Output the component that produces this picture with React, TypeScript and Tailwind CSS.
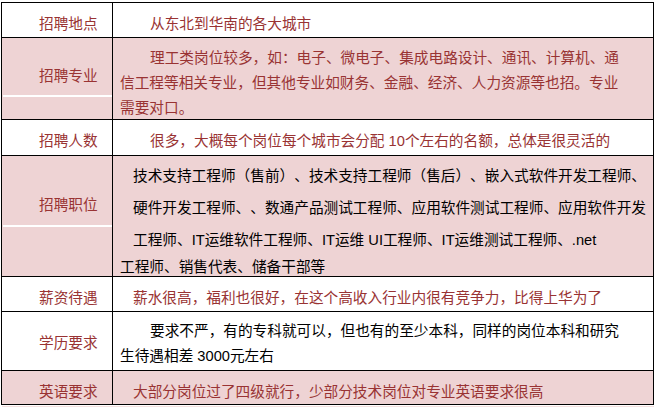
import React from 'react';

type Line = { text: string; cls?: string };

interface Row {
  label: string;
  height: string;
  pink?: boolean;
  labelPad: string;
  // white rule inside the label cell (only in some pink rows)
  rule?: string;
  textPad: string;
  leading: string;
  color: string;
  lines: Line[];
}

const rows: Row[] = [
  {
    label: '招聘地点',
    height: 'h-[35px]',
    labelPad: 'pt-[11px]',
    textPad: 'pt-[11px]',
    leading: 'leading-[20px]',
    color: 'text-[#993333]',
    lines: [{ text: '从东北到华南的各大城市', cls: 'pl-[30px]' }],
  },
  {
    label: '招聘专业',
    height: 'h-[82px]',
    pink: true,
    labelPad: 'pt-[28px]',
    rule: 'top-[57px]',
    textPad: 'pt-[8px]',
    leading: 'leading-[25px]',
    color: 'text-[#993333]',
    lines: [
      { text: '理工类岗位较多，如：电子、微电子、集成电路设计、通讯、计算机、通', cls: 'pl-[30px]' },
      { text: '信工程等相关专业，但其他专业如财务、金融、经济、人力资源等也招。专业' },
      { text: '需要对口。' },
    ],
  },
  {
    label: '招聘人数',
    height: 'h-[36px]',
    labelPad: 'pt-[11px]',
    textPad: 'pt-[11px]',
    leading: 'leading-[20px]',
    color: 'text-[#993333]',
    lines: [{ text: '很多，大概每个岗位每个城市会分配 10个左右的名额，总体是很灵活的', cls: 'pl-[30px]' }],
  },
  {
    label: '招聘职位',
    height: 'h-[121px]',
    pink: true,
    labelPad: 'pt-[39px]',
    rule: 'top-[69px]',
    textPad: 'pt-[7px]',
    leading: 'leading-[27px]',
    color: 'text-black',
    lines: [
      { text: '技术支持工程师（售前）、技术支持工程师（售后）、嵌入式软件开发工程师、', cls: 'pl-[13px]' },
      { text: '硬件开发工程师、、数通产品测试工程师、应用软件测试工程师、应用软件开发', cls: 'pl-[13px] mt-[5px]' },
      { text: '工程师、IT运维软件工程师、IT运维 UI工程师、IT运维测试工程师、.net', cls: 'pl-[13px] mt-[5px]' },
      { text: '工程师、销售代表、储备干部等' },
    ],
  },
  {
    label: '薪资待遇',
    height: 'h-[35px]',
    labelPad: 'pt-[11px]',
    textPad: 'pt-[11px]',
    leading: 'leading-[20px]',
    color: 'text-[#993333]',
    lines: [{ text: '薪水很高，福利也很好，在这个高收入行业内很有竞争力，比得上华为了', cls: 'pl-[13px]' }],
  },
  {
    label: '学历要求',
    height: 'h-[59px]',
    labelPad: 'pt-[21px]',
    textPad: 'pt-[7px]',
    leading: 'leading-[25px]',
    color: 'text-black',
    lines: [
      { text: '要求不严，有的专科就可以，但也有的至少本科，同样的岗位本科和研究', cls: 'pl-[30px]' },
      { text: '生待遇相差 3000元左右' },
    ],
  },
  {
    label: '英语要求',
    height: 'h-[33px]',
    pink: true,
    labelPad: 'pt-[11px]',
    textPad: 'pt-[11px]',
    leading: 'leading-[20px]',
    color: 'text-[#993333]',
    lines: [{ text: '大部分岗位过了四级就行，少部分技术岗位对专业英语要求很高', cls: 'pl-[13px]' }],
  },
];

export default function App() {
  return (
    <div
      className="w-[662px] h-[409px] bg-white overflow-hidden text-[14.67px] [text-spacing-trim:space-all]"
      style={{ fontFamily: '"Liberation Sans", "Noto Sans CJK SC", sans-serif' }}
    >
      <div className="ml-[1px] mt-[2px] w-[653px] border border-black">
        {rows.map((row, i) => (
          <div
            key={row.label}
            className={`flex ${row.height} ${i < rows.length - 1 ? 'border-b border-black' : ''} ${row.pink ? 'bg-[#eed3d4]' : ''}`}
          >
            {/* 左侧标题 */}
            <div className={`relative w-[111px] shrink-0 border-r border-black pl-[37px] leading-[20px] text-[#993333] ${row.labelPad}`}>
              {row.label}
              {row.rule && <div className={`absolute left-[1px] right-0 h-[2px] bg-white ${row.rule}`} />}
            </div>

            {/* 右侧内容 */}
            <div className={`flex-1 pl-[7px] whitespace-nowrap ${row.textPad} ${row.leading} ${row.color}`}>
              {row.lines.map((line, j) => (
                <div key={j} className={line.cls}>
                  {line.text}
                </div>
              ))}
            </div>
          </div>
        ))}
      </div>
      <div className="ml-[2px] mt-[1px] w-[652px] h-px bg-[#f3e0e0]" />
    </div>
  );
}
